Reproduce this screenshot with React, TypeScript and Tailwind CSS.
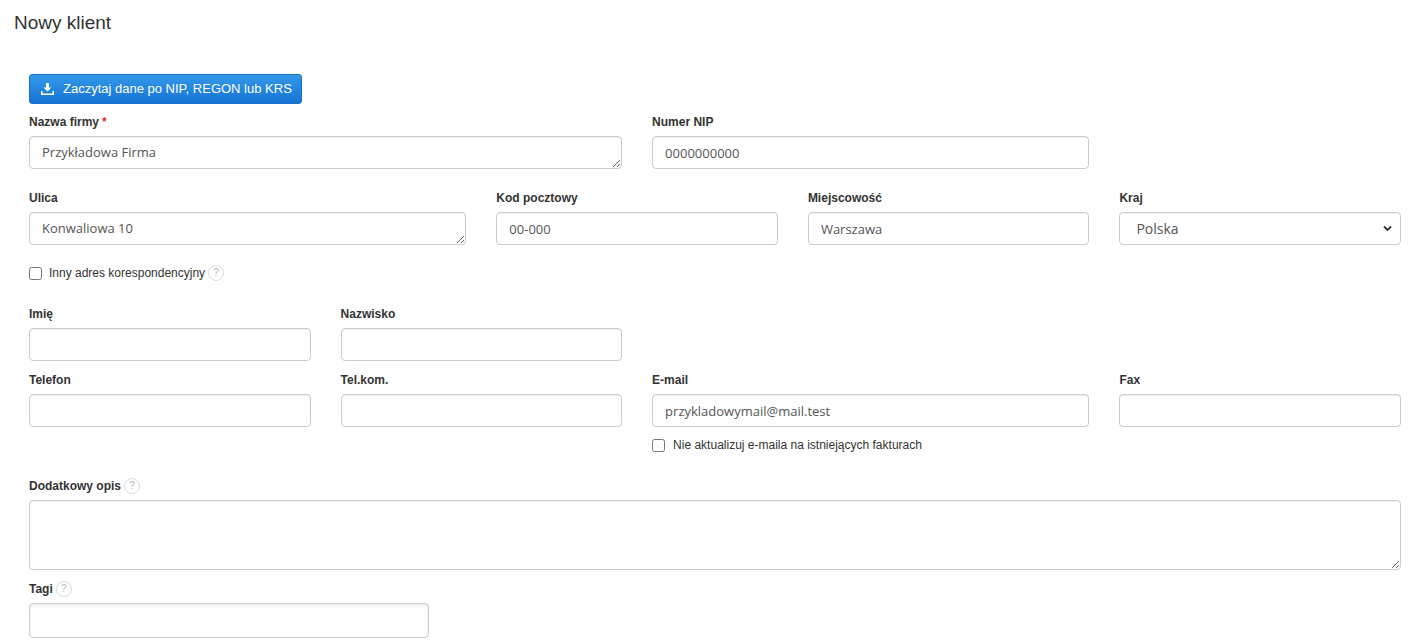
import { useState } from 'react';

const inputCls =
  'block w-full h-[33px] rounded-[4px] border border-[#cccccc] bg-white px-[12px] text-[13px] text-[#555555] shadow-[inset_0_1px_1px_rgba(0,0,0,0.075)] outline-none font-["Open_Sans",sans-serif]';

const labelCls = 'flex items-center h-[17px] mb-[6px] text-[12px] font-bold text-[#333333]';

function Help() {
  return (
    <span className="ml-[3px] inline-flex h-[16px] w-[16px] items-center justify-center rounded-full border border-[#dddddd] text-[10px] font-normal leading-none text-[#b5b5b5]">
      ?
    </span>
  );
}

function Field({
  label,
  value,
  span,
  textarea,
  required,
}: {
  label: string;
  value?: string;
  span: string;
  textarea?: boolean;
  required?: boolean;
}) {
  const [val, setVal] = useState(value ?? '');
  return (
    <div className={span}>
      <label className={labelCls}>
        {label}
        {required && <span className="ml-[3px] text-[#d9302c]">*</span>}
      </label>
      {textarea ? (
        <textarea
          rows={1}
          value={val}
          onChange={(e) => setVal(e.target.value)}
          className={inputCls + ' py-[7px] leading-[17px]'}
        />
      ) : (
        <input value={val} onChange={(e) => setVal(e.target.value)} className={inputCls} />
      )}
    </div>
  );
}

function DownloadIcon() {
  return (
    <svg width="13" height="12" viewBox="0 0 13 12" fill="white">
      <path d="M5 0h3v4.5h2.5L6.5 8.5 2.5 4.5H5z" />
      <path d="M0 8h1.5v2.5h10V8H13v4H0z" />
    </svg>
  );
}

export default function App() {
  const [country, setCountry] = useState('PL');
  return (
    <div className="min-h-screen bg-white font-['Liberation_Sans',Arial,sans-serif] text-[#333333]">
      <h1 className="pl-[14px] pt-[12px] text-[19px] leading-[22px] font-normal text-[#333333]">Nowy klient</h1>

      <div className="mt-[40px] pl-[29px] pr-[19px]">
        <button
          type="button"
          className="flex h-[30px] items-center gap-[9px] rounded-[3px] border border-[#1b6fc4] bg-gradient-to-b from-[#3399ea] to-[#1673d4] pl-[11px] pr-[9px] text-[13px] text-white"
        >
          <DownloadIcon />
          Zaczytaj dane po NIP, REGON lub KRS
        </button>

        <div className="mt-[9px] grid grid-cols-9 gap-x-[30px]">
          <Field label="Nazwa firmy" value="Przykładowa Firma" span="col-span-4" textarea required />
          <Field label="Numer NIP" value="0000000000" span="col-span-3" />
        </div>

        <div className="mt-[20px] grid grid-cols-9 gap-x-[30px]">
          <Field label="Ulica" value="Konwaliowa 10" span="col-span-3" textarea />
          <Field label="Kod pocztowy" value="00-000" span="col-span-2" />
          <Field label="Miejscowość" value="Warszawa" span="col-span-2" />
          <div className="col-span-2">
            <label className={labelCls}>Kraj</label>
            <div className="relative">
              <select
                value={country}
                onChange={(e) => setCountry(e.target.value)}
                className={inputCls + ' appearance-none pl-[16px] text-[14px]'}
              >
                <option value="PL">Polska</option>
                <option value="DE">Niemcy</option>
              </select>
              <svg
                className="pointer-events-none absolute right-[9px] top-[13px]"
                width="9"
                height="7"
                viewBox="0 0 9 7"
                fill="none"
                stroke="#333"
                strokeWidth="1.8"
              >
                <path d="M1 1.5l3.5 3.5L8 1.5" />
              </svg>
            </div>
          </div>
        </div>

        <label className="mt-[18px] flex h-[20px] items-center text-[12px] text-[#333333]">
          <input type="checkbox" className="mr-[7px] h-[13px] w-[13px]" />
          Inny adres korespondencyjny
          <Help />
        </label>

        <div className="mt-[22px] grid grid-cols-9 gap-x-[30px]">
          <Field label="Imię" span="col-span-2" />
          <Field label="Nazwisko" span="col-span-2" />
        </div>

        <div className="mt-[10px] grid grid-cols-9 gap-x-[30px]">
          <Field label="Telefon" span="col-span-2" />
          <Field label="Tel.kom." span="col-span-2" />
          <div className="col-span-3">
            <Field label="E-mail" value="przykladowymail@mail.test" span="" />
            <label className="mt-[9px] flex h-[18px] items-center text-[12px] text-[#333333]">
              <input type="checkbox" className="mr-[8px] h-[13px] w-[13px]" />
              Nie aktualizuj e-maila na istniejących fakturach
            </label>
          </div>
          <Field label="Fax" span="col-span-2" />
        </div>

        <div className="mt-[23px]">
          <label className={labelCls + ' mb-[5px]'}>
            Dodatkowy opis
            <Help />
          </label>
          <textarea className={inputCls + ' h-[70px] py-[7px]'} />
        </div>

        <div className="mt-[10px]">
          <label className={labelCls + ' mb-[5px]'}>
            Tagi
            <Help />
          </label>
          <div className="w-[400px]">
            <input className={inputCls + ' h-[35px] shadow-[inset_0_2px_3px_rgba(0,0,0,0.08)]'} />
          </div>
        </div>
      </div>
    </div>
  );
}
